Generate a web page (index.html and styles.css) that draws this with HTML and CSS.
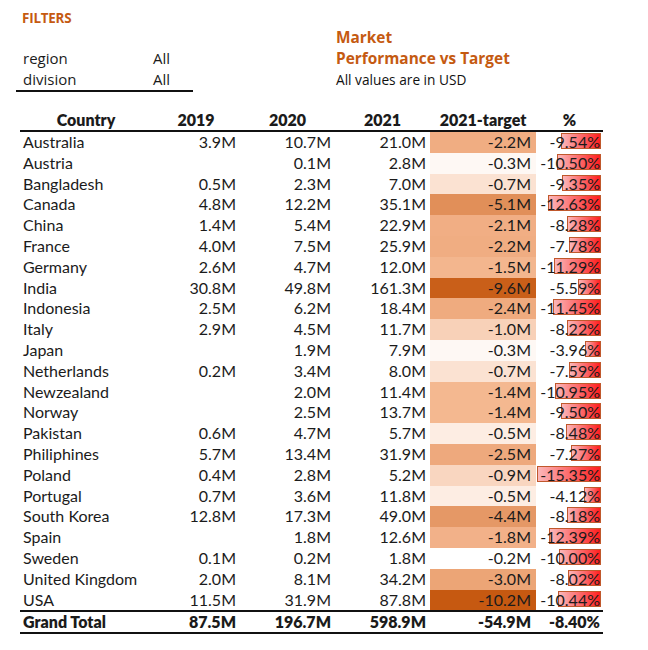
FILE: index.html
```html
<!DOCTYPE html>
<html>
<head>
<meta charset="utf-8">
<link rel="stylesheet" href="styles.css">
</head>
<body>
<div class="page">
  <div class="top">
    <div class="filters">
      <div class="filters-label">FILTERS</div>
      <div class="filter-grid">
        <span>region</span><span>All</span>
        <span>division</span><span>All</span>
      </div>
    </div>
    <div class="title">
      <div class="title-main">Market</div>
      <div class="title-main">Performance vs Target</div>
      <div class="title-sub">All values are in USD</div>
    </div>
  </div>

  <table class="data">
    <thead>
      <tr><th class="h-country">Country</th><th class="h-2019">2019</th><th class="h-num">2020</th><th class="h-num">2021</th><th class="h-target">2021-target</th><th class="h-pct">%</th></tr>
    </thead>
    <tbody>
      <tr><td>Australia</td><td>3.9M</td><td>10.7M</td><td>21.0M</td><td class="t" style="background:#f0ad82">-2.2M</td><td class="p"><span class="bar" style="width:39.8px"></span><span class="v">-9.54%</span></td></tr>
      <tr><td>Austria</td><td></td><td>0.1M</td><td>2.8M</td><td class="t" style="background:#fef8f4">-0.3M</td><td class="p"><span class="bar" style="width:43.8px"></span><span class="v">-10.50%</span></td></tr>
      <tr><td>Bangladesh</td><td>0.5M</td><td>2.3M</td><td>7.0M</td><td class="t" style="background:#fbe2d2">-0.7M</td><td class="p"><span class="bar" style="width:39px"></span><span class="v">-9.35%</span></td></tr>
      <tr><td>Canada</td><td>4.8M</td><td>12.2M</td><td>35.1M</td><td class="t" style="background:#e18f59">-5.1M</td><td class="p"><span class="bar" style="width:52.7px"></span><span class="v">-12.63%</span></td></tr>
      <tr><td>China</td><td>1.4M</td><td>5.4M</td><td>22.9M</td><td class="t" style="background:#f1ae84">-2.1M</td><td class="p"><span class="bar" style="width:34.5px"></span><span class="v">-8.28%</span></td></tr>
      <tr><td>France</td><td>4.0M</td><td>7.5M</td><td>25.9M</td><td class="t" style="background:#f0ad82">-2.2M</td><td class="p"><span class="bar" style="width:32.4px"></span><span class="v">-7.78%</span></td></tr>
      <tr><td>Germany</td><td>2.6M</td><td>4.7M</td><td>12.0M</td><td class="t" style="background:#f3b68e">-1.5M</td><td class="p"><span class="bar" style="width:47.1px"></span><span class="v">-11.29%</span></td></tr>
      <tr><td>India</td><td>30.8M</td><td>49.8M</td><td>161.3M</td><td class="t" style="background:#c95f19">-9.6M</td><td class="p"><span class="bar" style="width:23.3px"></span><span class="v">-5.59%</span></td></tr>
      <tr><td>Indonesia</td><td>2.5M</td><td>6.2M</td><td>18.4M</td><td class="t" style="background:#efab7f">-2.4M</td><td class="p"><span class="bar" style="width:47.7px"></span><span class="v">-11.45%</span></td></tr>
      <tr><td>Italy</td><td>2.9M</td><td>4.5M</td><td>11.7M</td><td class="t" style="background:#f8d1b8">-1.0M</td><td class="p"><span class="bar" style="width:34.3px"></span><span class="v">-8.22%</span></td></tr>
      <tr><td>Japan</td><td></td><td>1.9M</td><td>7.9M</td><td class="t" style="background:#fef8f4">-0.3M</td><td class="p"><span class="bar" style="width:16.5px"></span><span class="v">-3.96%</span></td></tr>
      <tr><td>Netherlands</td><td>0.2M</td><td>3.4M</td><td>8.0M</td><td class="t" style="background:#fbe2d2">-0.7M</td><td class="p"><span class="bar" style="width:31.6px"></span><span class="v">-7.59%</span></td></tr>
      <tr><td>Newzealand</td><td></td><td>2.0M</td><td>11.4M</td><td class="t" style="background:#f4b890">-1.4M</td><td class="p"><span class="bar" style="width:45.7px"></span><span class="v">-10.95%</span></td></tr>
      <tr><td>Norway</td><td></td><td>2.5M</td><td>13.7M</td><td class="t" style="background:#f4b890">-1.4M</td><td class="p"><span class="bar" style="width:39.6px"></span><span class="v">-9.50%</span></td></tr>
      <tr><td>Pakistan</td><td>0.6M</td><td>4.7M</td><td>5.7M</td><td class="t" style="background:#fdede3">-0.5M</td><td class="p"><span class="bar" style="width:35.4px"></span><span class="v">-8.48%</span></td></tr>
      <tr><td>Philiphines</td><td>5.7M</td><td>13.4M</td><td>31.9M</td><td class="t" style="background:#eea97d">-2.5M</td><td class="p"><span class="bar" style="width:30.3px"></span><span class="v">-7.27%</span></td></tr>
      <tr><td>Poland</td><td>0.4M</td><td>2.8M</td><td>5.2M</td><td class="t" style="background:#f9d6c0">-0.9M</td><td class="p"><span class="bar" style="width:64px"></span><span class="v">-15.35%</span></td></tr>
      <tr><td>Portugal</td><td>0.7M</td><td>3.6M</td><td>11.8M</td><td class="t" style="background:#fdede3">-0.5M</td><td class="p"><span class="bar" style="width:17.2px"></span><span class="v">-4.12%</span></td></tr>
      <tr><td>South Korea</td><td>12.8M</td><td>17.3M</td><td>49.0M</td><td class="t" style="background:#e59866">-4.4M</td><td class="p"><span class="bar" style="width:34.1px"></span><span class="v">-8.18%</span></td></tr>
      <tr><td>Spain</td><td></td><td>1.8M</td><td>12.6M</td><td class="t" style="background:#f2b189">-1.8M</td><td class="p"><span class="bar" style="width:51.7px"></span><span class="v">-12.39%</span></td></tr>
      <tr><td>Sweden</td><td>0.1M</td><td>0.2M</td><td>1.8M</td><td class="t" style="background:#ffffff">-0.2M</td><td class="p"><span class="bar" style="width:41.7px"></span><span class="v">-10.00%</span></td></tr>
      <tr><td>United Kingdom</td><td>2.0M</td><td>8.1M</td><td>34.2M</td><td class="t" style="background:#eca576">-3.0M</td><td class="p"><span class="bar" style="width:33.4px"></span><span class="v">-8.02%</span></td></tr>
      <tr><td>USA</td><td>11.5M</td><td>31.9M</td><td>87.8M</td><td class="t" style="background:#c65911">-10.2M</td><td class="p"><span class="bar" style="width:43.5px"></span><span class="v">-10.44%</span></td></tr>
    </tbody>
    <tfoot>
      <tr><td>Grand Total</td><td>87.5M</td><td>196.7M</td><td>598.9M</td><td class="t">-54.9M</td><td class="p"><span class="v">-8.40%</span></td></tr>
    </tfoot>
  </table>
</div>
</body>
</html>
```

FILE: styles.css
```css
html, body {
  margin: 0;
  padding: 0;
  background: #ffffff;
}

.page {
  padding-top: 8px;
  color: #1b1b1b;
}

.top {
  display: flex;
}

.filters {
  width: 177px;
  margin-left: 16px;
  margin-right: 143px;
}

.filters-label {
  font-family: "Open Sans", sans-serif;
  font-weight: 700;
  font-size: 13.4px;
  line-height: 21px;
  color: #c55a11;
  padding-left: 6px;
  letter-spacing: -0.2px;
}

.filter-grid {
  margin-top: 19px;
  display: grid;
  grid-template-columns: 130px 1fr;
  padding-left: 7px;
  border-bottom: 2px solid #111;
  font-family: "Open Sans", sans-serif;
  font-size: 15px;
  line-height: 21px;
}

.title {
  padding-top: 19px;
  font-family: "Open Sans", sans-serif;
}

.title-main {
  font-weight: 700;
  font-size: 15.4px;
  line-height: 21px;
  color: #c55a11;
}

.title-sub {
  font-size: 13.7px;
  line-height: 21px;
  color: #111;
}

.data {
  margin-top: 18px;
  margin-left: 20px;
  width: 583px;
  border-collapse: collapse;
  table-layout: fixed;
  font-family: "Lato", sans-serif;
  font-size: 16px;
}

.h-country { width: 132px; }
.h-2019 { width: 88px; }
.h-num { width: 95px; }
.h-target { width: 106px; }
.h-pct { width: 67px; }

.data th {
  font-weight: 800;
  text-align: center;
  height: 20px;
  padding: 0;
  line-height: 20px;
  border-bottom: 2px solid #111;
  white-space: nowrap;
}

.data td {
  height: 20.8px;
  line-height: 20.8px;
  padding: 0 4px 0 0;
  text-align: right;
  white-space: nowrap;
}

.data td:first-child {
  text-align: left;
  padding-left: 3px;
}

.data td.t {
  padding-right: 5px;
}

.data td.p {
  position: relative;
  padding-right: 3px;
}

.bar {
  position: absolute;
  right: 2px;
  top: 1px;
  height: 16px;
  box-sizing: border-box;
  border: 1px solid #c0582c;
  background: linear-gradient(to right, #fbb7b9, #ff1f1f);
}

.v {
  position: relative;
}

.data tfoot td {
  font-weight: 800;
  border-top: 2px solid #111;
  border-bottom: 2px solid #111;
  height: 20px;
  line-height: 20px;
}
```
